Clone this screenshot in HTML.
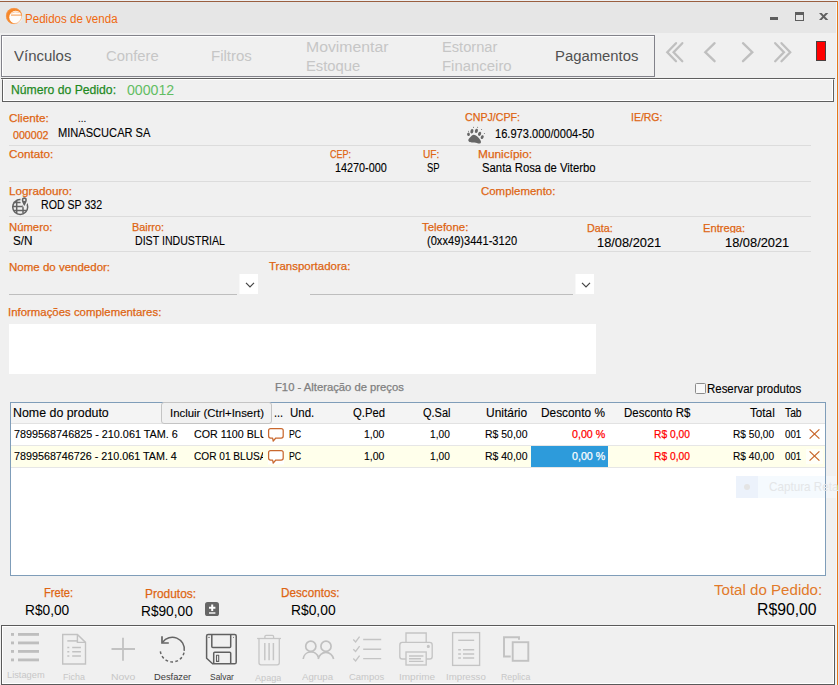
<!DOCTYPE html>
<html lang="pt-BR"><head><meta charset="utf-8"><title>Pedidos de venda</title>
<style>
*{box-sizing:border-box;margin:0;padding:0}
html,body{width:839px;height:685px;overflow:hidden;background:#F0F0F0}
body{position:relative;font-family:"Liberation Sans",sans-serif;}
.t{position:absolute;white-space:nowrap;display:block;transform-origin:0 0}
.a{position:absolute;display:block}
.sep{position:absolute;height:1px;background:#DCDCDC;left:9px;width:802px}
svg{position:absolute;overflow:visible}

</style></head>
<body>
<!-- window frame -->
<div class="a" style="left:0;top:0;width:839px;height:1px;background:#EEF0F2"></div>
<div class="a" style="left:0;top:2px;width:837px;height:31px;background:#E6E6E6"></div>
<div class="a" style="left:0;top:1px;width:838px;height:1px;background:#9A5F40"></div>
<div class="a" style="left:837px;top:1px;width:1px;height:684px;background:#E8761A"></div>
<div class="a" style="left:838px;top:0;width:1px;height:685px;background:#DFE8F0"></div>
<div class="a" style="left:836px;top:2px;width:1px;height:683px;background:#F4F7FA"></div>
<!-- app icon -->
<svg style="left:6px;top:8px" width="16" height="16" viewBox="0 0 16 16">
  <circle cx="8" cy="8" r="8" fill="#F5872A"/>
  <circle cx="9.7" cy="9.3" r="6.45" fill="#FFFDFB"/>
  <circle cx="8" cy="8" r="7.7" fill="none" stroke="#F5A05A" stroke-width="0.6"/>
  <path d="M5 7.1 H16" stroke="#F58220" stroke-width="0.8" fill="none"/>
  <path d="M5.2 5.2 Q9 2.9 13.4 4.5" stroke="#F9B47C" stroke-width="0.7" fill="none"/>
</svg>
<!-- window buttons -->
<div class="a" style="left:770px;top:17px;width:8px;height:3px;background:#5E5E5E"></div>
<div class="a" style="left:795px;top:12px;width:9px;height:9px;border:1px solid #5E5E5E;border-top-width:3px"></div>
<svg style="left:818px;top:13px" width="11" height="7" viewBox="818 13 11 7"><path d="M819 13 h2.7 l6.6 7 h-2.7 z" fill="#606060"/><path d="M828.3 13 h-2.7 l-6.6 7 h2.7 z" fill="#606060"/></svg>
<!-- top toolbar box -->
<div class="a" style="left:1px;top:35px;width:654px;height:42px;border:1px solid #82828A;box-shadow:inset 1px 1px 0 #FFFFFF"></div>
<!-- nav arrows -->
<svg style="left:660px;top:38px" width="140" height="30" viewBox="660 38 140 30" fill="none" stroke="#BFBFBF" stroke-width="2.3" stroke-linecap="round">
  <path d="M676 43.2 L667.3 52.2 L676 61.2"/><path d="M682.3 43.2 L673.6 52.2 L682.3 61.2"/>
  <path d="M714.6 43.2 L705.3 52.2 L714.6 61.2"/>
  <path d="M743 43.2 L752.3 52.2 L743 61.2"/>
  <path d="M775.2 43.2 L783.9 52.2 L775.2 61.2"/><path d="M781.5 43.2 L790.2 52.2 L781.5 61.2"/>
</svg>
<div class="a" style="left:816px;top:41px;width:10px;height:20px;background:#FF0000;border:1px solid #4A4040"></div>
<!-- line + numero box -->
<div class="a" style="left:1px;top:78px;width:834px;height:1px;background:#5F5F5F"></div>
<div class="a" style="left:2px;top:79px;width:832px;height:23px;border:1px solid #5F5F5F;border-top:1px solid #FFFFFF;box-shadow:inset 1px 0 0 #FFFFFF, inset -1px -1px 0 #FFFFFF"></div>
<!-- separators -->
<div class="sep" style="top:145px"></div>
<div class="sep" style="top:181px"></div>
<div class="sep" style="top:216px"></div>
<div class="sep" style="top:251px"></div>
<!-- paw icon -->
<svg style="left:460px;top:122px" width="30" height="26" viewBox="460 122 30 26" fill="#666">
  <ellipse cx="468.5" cy="134.3" rx="1.4" ry="1.7" transform="rotate(-15 468.5 134.3)"/>
  <ellipse cx="471.9" cy="131.3" rx="1.5" ry="2.3" transform="rotate(12 471.9 131.3)"/>
  <ellipse cx="476.4" cy="130.9" rx="1.5" ry="2.2" transform="rotate(15 476.4 130.9)"/>
  <ellipse cx="479.6" cy="133.8" rx="1.5" ry="2.2" transform="rotate(20 479.6 133.8)"/>
  <ellipse cx="482.2" cy="137.1" rx="1.4" ry="2" transform="rotate(25 482.2 137.1)"/>
  <circle cx="468.5" cy="131.2" r="0.5"/><circle cx="473.5" cy="127.3" r="0.55"/><circle cx="477.6" cy="127.3" r="0.55"/><circle cx="481.6" cy="129.5" r="0.5"/><circle cx="484.4" cy="133.5" r="0.5"/>
  <path d="M473.9 134.8 C476 134.8 478.2 137.2 480 139.6 C481.6 141.8 481.2 143.8 479.4 143.6 C477.4 143.4 476.6 142.4 474.4 142.4 C472 142.4 470.2 142.8 468.9 141.6 C467.6 140.2 468.6 138.6 470 137.4 C471.4 136.2 472.4 134.8 473.9 134.8 Z"/>
</svg>
<!-- globe icon -->
<svg style="left:5px;top:192px" width="40" height="28" viewBox="5 192 40 28" fill="none" stroke="#646464" stroke-width="1.5">
  <circle cx="20.2" cy="207" r="7.5"/>
  <path d="M16.7 200.6 V213.4 M23 205 V213.6 M13.4 202.6 H20.6 M12.8 206.6 H22 M13.4 210.6 H27"/>
  <path d="M24.3 196.6 C22.4 196.6 21.1 198 21.1 199.9 C21.1 202.4 24.3 207 24.3 207 C24.3 207 27.5 202.4 27.5 199.9 C27.5 198 26.2 196.6 24.3 196.6 Z" fill="#646464" stroke="#F0F0F0" stroke-width="1.3"/>
  <circle cx="24.3" cy="200" r="1.1" fill="#F0F0F0" stroke="none"/>
</svg>
<!-- dropdowns -->
<div class="a" style="left:9px;top:294px;width:228px;height:1px;background:#BEBEBE"></div>
<div class="a" style="left:239px;top:274px;width:19px;height:20px;background:#FFFFFF;border-left:1px solid #F8F8F8"></div>
<svg style="left:245px;top:282px" width="10" height="6" viewBox="0 0 10 6"><path d="M1 0.8 L5 4.8 L9 0.8" fill="none" stroke="#444" stroke-width="1.2"/></svg>
<div class="a" style="left:310px;top:294px;width:263px;height:1px;background:#BEBEBE"></div>
<div class="a" style="left:575px;top:274px;width:19px;height:20px;background:#FFFFFF;border-left:1px solid #F8F8F8"></div>
<svg style="left:581px;top:282px" width="10" height="6" viewBox="0 0 10 6"><path d="M1 0.8 L5 4.8 L9 0.8" fill="none" stroke="#444" stroke-width="1.2"/></svg>
<!-- textarea -->
<div class="a" style="left:9px;top:324px;width:587px;height:50px;background:#FFFFFF"></div>
<!-- checkbox -->
<div class="a" style="left:695px;top:383px;width:11px;height:11px;background:#F9F9F9;border:1px solid #8C8C8C;border-radius:1.5px"></div>
<!-- grid -->
<div class="a" style="left:10px;top:402px;width:816px;height:174px;background:#FFFFFF;border:1px solid #7F9DB9"></div>
<div class="a" style="left:11px;top:403px;width:814px;height:20px;background:#F4F4F4"></div>
<div class="a" style="left:11px;top:423px;width:814px;height:1px;background:#E2E2E2"></div>
<div class="a" style="left:11px;top:445px;width:814px;height:1px;background:#E6E6E6"></div>
<div class="a" style="left:11px;top:446px;width:814px;height:21px;background:#FFFFEB"></div>
<div class="a" style="left:11px;top:467px;width:814px;height:1px;background:#E6E6E6"></div>
<div class="a" style="left:531px;top:446px;width:77px;height:21px;background:#2D9BDB"></div>
<div class="a" style="left:161px;top:402px;width:111px;height:22px;background:#F1F1F1;border:1px solid #C4C4C4;border-radius:3px"></div>
<!-- comment icons + X icons -->
<svg style="left:266px;top:426px" width="22" height="18" viewBox="266 426 22 18"><path d="M270.6 428.6 H281.2 Q283.2 428.6 283.2 430.6 V436 Q283.2 438 281.2 438 H275.8 L273.2 441.2 L272.6 438 H270.6 Q268.6 438 268.6 436 V430.6 Q268.6 428.6 270.6 428.6 Z" fill="#FFFFFF" stroke="#C9682E" stroke-width="1.25" stroke-linejoin="round"/></svg>
<svg style="left:266px;top:448px" width="22" height="18" viewBox="266 448 22 18"><rect x="268" y="449.8" width="16" height="14.6" fill="#FFFFFF"/><path d="M270.6 450.6 H281.2 Q283.2 450.6 283.2 452.6 V458 Q283.2 460 281.2 460 H275.8 L273.2 463.2 L272.6 460 H270.6 Q268.6 460 268.6 458 V452.6 Q268.6 450.6 270.6 450.6 Z" fill="#FFFFFF" stroke="#C9682E" stroke-width="1.25" stroke-linejoin="round"/></svg>
<svg style="left:809.4px;top:429px" width="11" height="10" viewBox="0 0 11 10"><path d="M0.6 0.4 L10.4 9.6 M10.4 0.4 L0.6 9.6" stroke="#C8662A" stroke-width="1.3" fill="none"/></svg>
<div class="a" style="left:806px;top:449px;width:17px;height:15px;background:#FFFFF8"></div>
<svg style="left:809.4px;top:451px" width="11" height="10" viewBox="0 0 11 10"><path d="M0.6 0.4 L10.4 9.6 M10.4 0.4 L0.6 9.6" stroke="#C8662A" stroke-width="1.3" fill="none"/></svg>
<!-- faint overlay -->
<div class="a" style="left:736px;top:476px;width:22px;height:22px;background:#ECF2FB"></div>
<div class="a" style="left:758px;top:476px;width:67px;height:22px;background:#F5FAFE"></div>
<div class="a" style="left:826px;top:476px;width:10px;height:22px;background:#F3F5F7"></div>
<div class="a" style="left:744px;top:484px;width:6px;height:6px;border-radius:3px;background:#E4E4E4"></div>
<!-- small icon near produtos -->
<svg style="left:205px;top:602px" width="14" height="14" viewBox="0 0 14 14"><rect x="0" y="0" width="14" height="14" rx="2.6" fill="#666"/><path d="M7.2 2.6 V9 M4 5.8 H10.4" stroke="#FFF" stroke-width="2" fill="none"/><path d="M4 11 H10.4" stroke="#FFF" stroke-width="1.4"/></svg>
<!-- bottom toolbar box -->
<div class="a" style="left:1px;top:625px;width:834px;height:60px;border:1px solid #5A5A5A;box-shadow:inset 1px 1px 0 #FFFFFF, inset -1px -1px 0 #FFFFFF"></div>
<!-- bottom toolbar icons -->
<svg style="left:0;top:626px" width="839" height="58" viewBox="0 626 839 58" fill="none">
  <!-- Listagem -->
  <g fill="#BEBEBE">
    <rect x="11" y="633" width="3" height="2.8"/><rect x="18" y="633" width="21" height="2.8"/>
    <rect x="11" y="641.5" width="3" height="2.8"/><rect x="18" y="641.5" width="21" height="2.8"/>
    <rect x="11" y="650" width="3" height="2.8"/><rect x="18" y="650" width="21" height="2.8"/>
    <rect x="11" y="658.5" width="3" height="2.8"/><rect x="18" y="658.5" width="21" height="2.8"/>
  </g>
  <!-- Ficha -->
  <g stroke="#C2C2C2" stroke-width="1.4">
    <path d="M62.7 634.5 H77.4 L85.5 642.4 V664 H62.7 Z"/>
    <path d="M77.4 634.5 V642.4 H85.5"/>
    <path d="M67.3 640.9 H77.4" stroke-width="1.5"/>
    <path d="M67.3 647.6 H69.3 M72.2 647.6 H80.9 M67.3 651.8 H69.3 M72.2 651.8 H80.9 M67.3 655.9 H69.3 M72.2 655.9 H80.9" stroke-width="1.5"/>
  </g>
  <!-- Novo -->
  <path d="M123 637.8 V660.8 M111.5 649 H135" stroke="#C2C2C2" stroke-width="1.8"/>
  <!-- Desfazer -->
  <g stroke="#646464" stroke-width="1.45">
    <path d="M162.6 642.2 A12 12 0 0 1 184.2 650.9"/>
    <path d="M184 652.6 A12 12 0 0 1 160.3 649.9" stroke-dasharray="2.8 2.3"/>
    <path d="M162 636.2 V643 H168.8" stroke-width="1.7"/>
  </g>
  <!-- Salvar -->
  <g stroke="#606060" stroke-width="1.5" stroke-linejoin="round">
    <path d="M208.2 634.4 H234.6 Q236.2 634.4 236.2 636 V662.2 Q236.2 663.8 234.6 663.8 H212.6 L206.6 658.2 V636 Q206.6 634.4 208.2 634.4 Z"/>
    <path d="M211.8 634.6 V646.4 Q211.8 647.4 212.8 647.4 H229.7 Q230.7 647.4 230.7 646.4 V634.6"/>
    <path d="M213.7 663.6 V653.2 Q213.7 652.2 214.7 652.2 H229.7 Q230.7 652.2 230.7 653.2 V663.6"/>
    <rect x="216.5" y="655.2" width="2.2" height="6.2" stroke-width="1.1"/>
    <path d="M208.3 637.4 H209.7 M233.1 637.4 H233.9" stroke-width="1"/>
  </g>
  <!-- Apaga -->
  <g stroke="#C6C6C6" stroke-width="1.3">
    <path d="M257.1 638.5 H281"/>
    <path d="M264.9 638.5 V636.6 Q264.9 635.4 266.1 635.4 H272.4 Q273.6 635.4 273.6 636.6 V638.5"/>
    <path d="M259 638.5 V662.8 Q259 664.8 261 664.8 H277.3 Q279.3 664.8 279.3 662.8 V638.5"/>
    <path d="M264.8 643 V660.2 M269.1 643 V660.2 M273.4 643 V660.2" stroke-width="1.5"/>
  </g>
  <!-- Agrupa -->
  <g stroke="#C0C0C0" stroke-width="1.7">
    <circle cx="310.8" cy="646.2" r="5.1"/>
    <circle cx="326" cy="646.2" r="5.1"/>
    <path d="M303.2 659 A7.8 7.8 0 0 1 318.4 657.4"/>
    <path d="M318.2 659 A7.8 7.8 0 0 1 333.6 659"/>
  </g>
  <!-- Campos -->
  <g stroke="#C4C4C4" stroke-width="1.35">
    <path d="M353.3 639.6 L355.6 641.9 L359.6 636.6 M363.2 639.5 H381.2"/>
    <path d="M353.3 649.2 L355.6 651.5 L359.6 646.2 M363.2 649.2 H381.2" />
    <path d="M353.3 658.6 L355.6 660.9 L359.6 655.6 M363.2 658.6 H381.2"/>
  </g>
  <!-- Imprime -->
  <g stroke="#C4C4C4" stroke-width="1.35">
    <path d="M406 642.2 V633 H426.2 V642.2"/>
    <path d="M406 659 H402.4 Q399.8 659 399.8 656.4 V645 Q399.8 642.4 402.4 642.4 H429.6 Q432.2 642.4 432.2 645 V656.4 Q432.2 659 429.6 659 H426.2"/>
    <rect x="406" y="652" width="20.2" height="13"/>
    <path d="M409 656 H423.4 M409 658.7 H421 M409 661.4 H423.4"/>
    <circle cx="428.3" cy="646.4" r="0.9" fill="#C4C4C4"/>
  </g>
  <!-- Impresso -->
  <g stroke="#C4C4C4" stroke-width="1.35">
    <rect x="452.6" y="632.6" width="27" height="32.8"/>
    <path d="M458.2 640.3 H474.2"/>
    <path d="M458.2 649.7 H460.9 M463 649.7 H474.2 M458.2 653.9 H460.9 M463 653.9 H474.2 M458.2 658 H460.9 M463 658 H474.2" stroke-width="1.5"/>
  </g>
  <!-- Replica -->
  <g stroke="#C2C2C2" stroke-width="1.9">
    <path d="M510.7 656.5 H504 V637.2 H519 V639.8"/>
    <rect x="512.7" y="642.2" width="15.6" height="18.6"/>
  </g>
</svg>

<span class="t" style="left:24.57px;top:13.30px;font-size:12.51px;line-height:12.51px;color:#F0690F;transform:scaleX(0.9251);">Pedidos de venda</span>
<span class="t" style="left:13.90px;top:49.31px;font-size:14.65px;line-height:14.65px;color:#505050;transform:scaleX(1.0227);">Vínculos</span>
<span class="t" style="left:106.20px;top:49.31px;font-size:14.65px;line-height:14.65px;color:#C6C6C6;transform:scaleX(1.0107);">Confere</span>
<span class="t" style="left:211.17px;top:49.31px;font-size:14.65px;line-height:14.65px;color:#C6C6C6;transform:scaleX(1.0251);">Filtros</span>
<span class="t" style="left:306.12px;top:40.31px;font-size:14.65px;line-height:14.65px;color:#C6C6C6;transform:scaleX(1.0780);">Movimentar</span>
<span class="t" style="left:306.19px;top:59.31px;font-size:14.65px;line-height:14.65px;color:#C6C6C6;transform:scaleX(1.0099);">Estoque</span>
<span class="t" style="left:442.20px;top:40.31px;font-size:14.65px;line-height:14.65px;color:#C6C6C6;transform:scaleX(1.0008);">Estornar</span>
<span class="t" style="left:442.18px;top:59.31px;font-size:14.65px;line-height:14.65px;color:#C6C6C6;transform:scaleX(1.0191);">Financeiro</span>
<span class="t" style="left:555.38px;top:49.31px;font-size:14.65px;line-height:14.65px;color:#505050;transform:scaleX(1.0150);">Pagamentos</span>
<span class="t" style="left:11.27px;top:83.30px;font-size:13.09px;line-height:13.09px;color:#1F8A1F;transform:scaleX(0.9320);-webkit-text-stroke:0.25px;">Número do Pedido:</span>
<span class="t" style="left:126.90px;top:83.31px;font-size:14.65px;line-height:14.65px;color:#62BD62;transform:scaleX(0.9669);">000012</span>
<span class="t" style="left:9.20px;top:112.30px;font-size:11.72px;line-height:11.72px;color:#DE6512;transform:scaleX(1.0006);-webkit-text-stroke:0.25px;">Cliente:</span>
<span class="t" style="left:78.07px;top:112.30px;font-size:11.72px;line-height:11.72px;color:#000000;transform:scaleX(0.8341);-webkit-text-stroke:0.12px;">...</span>
<span class="t" style="left:13.20px;top:130.30px;font-size:10.75px;line-height:10.75px;color:#DE6512;transform:scaleX(0.9890);-webkit-text-stroke:0.25px;">000002</span>
<span class="t" style="left:57.71px;top:127.30px;font-size:12.51px;line-height:12.51px;color:#000000;transform:scaleX(0.8869);-webkit-text-stroke:0.12px;">MINASCUCAR SA</span>
<span class="t" style="left:465.20px;top:111.30px;font-size:11.72px;line-height:11.72px;color:#DE6512;transform:scaleX(0.9089);-webkit-text-stroke:0.25px;">CNPJ/CPF:</span>
<span class="t" style="left:494.60px;top:128.30px;font-size:12.51px;line-height:12.51px;color:#000000;transform:scaleX(0.8870);-webkit-text-stroke:0.12px;">16.973.000/0004-50</span>
<span class="t" style="left:631.21px;top:111.30px;font-size:11.72px;line-height:11.72px;color:#DE6512;transform:scaleX(0.8936);-webkit-text-stroke:0.25px;">IE/RG:</span>
<span class="t" style="left:9.20px;top:148.30px;font-size:11.72px;line-height:11.72px;color:#DE6512;transform:scaleX(1.0013);-webkit-text-stroke:0.25px;">Contato:</span>
<span class="t" style="left:330.20px;top:148.30px;font-size:11.72px;line-height:11.72px;color:#DE6512;transform:scaleX(0.7677);-webkit-text-stroke:0.25px;">CEP:</span>
<span class="t" style="left:334.90px;top:162.30px;font-size:12.51px;line-height:12.51px;color:#000000;transform:scaleX(0.8658);-webkit-text-stroke:0.12px;">14270-000</span>
<span class="t" style="left:423.20px;top:148.30px;font-size:11.72px;line-height:11.72px;color:#DE6512;transform:scaleX(0.8646);-webkit-text-stroke:0.25px;">UF:</span>
<span class="t" style="left:426.90px;top:162.30px;font-size:12.51px;line-height:12.51px;color:#000000;transform:scaleX(0.7590);-webkit-text-stroke:0.12px;">SP</span>
<span class="t" style="left:478.20px;top:148.30px;font-size:11.72px;line-height:11.72px;color:#DE6512;transform:scaleX(1.0122);-webkit-text-stroke:0.25px;">Município:</span>
<span class="t" style="left:481.90px;top:162.30px;font-size:12.51px;line-height:12.51px;color:#000000;transform:scaleX(0.9053);-webkit-text-stroke:0.12px;">Santa Rosa de Viterbo</span>
<span class="t" style="left:9.20px;top:185.30px;font-size:11.72px;line-height:11.72px;color:#DE6512;transform:scaleX(0.9977);-webkit-text-stroke:0.25px;">Logradouro:</span>
<span class="t" style="left:41.35px;top:199.30px;font-size:12.51px;line-height:12.51px;color:#000000;transform:scaleX(0.8485);-webkit-text-stroke:0.12px;">ROD SP 332</span>
<span class="t" style="left:481.20px;top:185.30px;font-size:11.72px;line-height:11.72px;color:#DE6512;transform:scaleX(0.9756);-webkit-text-stroke:0.25px;">Complemento:</span>
<span class="t" style="left:9.20px;top:221.30px;font-size:11.72px;line-height:11.72px;color:#DE6512;transform:scaleX(0.9647);-webkit-text-stroke:0.25px;">Número:</span>
<span class="t" style="left:13.20px;top:235.30px;font-size:12.51px;line-height:12.51px;color:#000000;transform:scaleX(0.9370);-webkit-text-stroke:0.12px;">S/N</span>
<span class="t" style="left:132.20px;top:221.30px;font-size:11.72px;line-height:11.72px;color:#DE6512;transform:scaleX(0.9282);-webkit-text-stroke:0.25px;">Bairro:</span>
<span class="t" style="left:135.05px;top:235.30px;font-size:12.51px;line-height:12.51px;color:#000000;transform:scaleX(0.8489);-webkit-text-stroke:0.12px;">DIST INDUSTRIAL</span>
<span class="t" style="left:421.90px;top:221.30px;font-size:11.72px;line-height:11.72px;color:#DE6512;transform:scaleX(0.9745);-webkit-text-stroke:0.25px;">Telefone:</span>
<span class="t" style="left:426.60px;top:235.30px;font-size:12.51px;line-height:12.51px;color:#000000;transform:scaleX(0.8876);-webkit-text-stroke:0.12px;">(0xx49)3441-3120</span>
<span class="t" style="left:587.20px;top:222.30px;font-size:11.72px;line-height:11.72px;color:#DE6512;transform:scaleX(0.9188);-webkit-text-stroke:0.25px;">Data:</span>
<span class="t" style="left:596.60px;top:237.31px;font-size:12.7px;line-height:12.7px;color:#000000;transform:scaleX(1.0104);-webkit-text-stroke:0.12px;">18/08/2021</span>
<span class="t" style="left:703.40px;top:222.30px;font-size:11.72px;line-height:11.72px;color:#DE6512;transform:scaleX(0.9513);-webkit-text-stroke:0.25px;height:10.9px;overflow:hidden;">Entrega:</span>
<span class="t" style="left:724.90px;top:237.31px;font-size:12.7px;line-height:12.7px;color:#000000;transform:scaleX(1.0119);-webkit-text-stroke:0.12px;">18/08/2021</span>
<span class="t" style="left:9.20px;top:261.30px;font-size:11.72px;line-height:11.72px;color:#DE6512;transform:scaleX(0.9818);-webkit-text-stroke:0.25px;">Nome do vendedor:</span>
<span class="t" style="left:268.90px;top:260.30px;font-size:11.72px;line-height:11.72px;color:#DE6512;transform:scaleX(0.9808);-webkit-text-stroke:0.25px;">Transportadora:</span>
<span class="t" style="left:8.23px;top:306.30px;font-size:11.72px;line-height:11.72px;color:#DE6512;transform:scaleX(0.9727);-webkit-text-stroke:0.25px;">Informações complementares:</span>
<span class="t" style="left:274.90px;top:382.30px;font-size:10.75px;line-height:10.75px;color:#808080;transform:scaleX(1.0469);-webkit-text-stroke:0.25px;">F10 - Alteração de preços</span>
<span class="t" style="left:707.38px;top:383.30px;font-size:12.51px;line-height:12.51px;color:#000000;transform:scaleX(0.9156);-webkit-text-stroke:0.12px;">Reservar produtos</span>
<span class="t" style="left:13.21px;top:407.30px;font-size:12.51px;line-height:12.51px;color:#000000;transform:scaleX(0.9913);-webkit-text-stroke:0.12px;">Nome do produto</span>
<span class="t" style="left:169.91px;top:408.30px;font-size:11.53px;line-height:11.53px;color:#000000;transform:scaleX(0.9885);-webkit-text-stroke:0.12px;">Incluir (Ctrl+Insert)</span>
<span class="t" style="left:273.83px;top:407.30px;font-size:12.51px;line-height:12.51px;color:#000000;transform:scaleX(0.8719);-webkit-text-stroke:0.12px;">...</span>
<span class="t" style="left:289.70px;top:407.30px;font-size:12.51px;line-height:12.51px;color:#000000;transform:scaleX(0.9178);-webkit-text-stroke:0.12px;">Und.</span>
<span class="t" style="left:352.90px;top:407.30px;font-size:12.51px;line-height:12.51px;color:#000000;transform:scaleX(0.9018);-webkit-text-stroke:0.12px;">Q.Ped</span>
<span class="t" style="left:423.10px;top:407.30px;font-size:12.51px;line-height:12.51px;color:#000000;transform:scaleX(0.8791);-webkit-text-stroke:0.12px;">Q.Sal</span>
<span class="t" style="left:486.40px;top:407.30px;font-size:12.51px;line-height:12.51px;color:#000000;transform:scaleX(0.9555);-webkit-text-stroke:0.12px;">Unitário</span>
<span class="t" style="left:540.95px;top:407.30px;font-size:12.51px;line-height:12.51px;color:#000000;transform:scaleX(0.9490);-webkit-text-stroke:0.12px;">Desconto %</span>
<span class="t" style="left:623.58px;top:407.30px;font-size:12.51px;line-height:12.51px;color:#000000;transform:scaleX(0.9186);-webkit-text-stroke:0.12px;">Desconto R$</span>
<span class="t" style="left:750.40px;top:407.30px;font-size:12.51px;line-height:12.51px;color:#000000;transform:scaleX(0.9366);-webkit-text-stroke:0.12px;">Total</span>
<span class="t" style="left:784.90px;top:407.30px;font-size:12.51px;line-height:12.51px;color:#000000;transform:scaleX(0.8218);-webkit-text-stroke:0.12px;">Tab</span>
<span class="t" style="left:14.20px;top:428.30px;font-size:11.72px;line-height:11.72px;color:#000000;transform:scaleX(0.9230);-webkit-text-stroke:0.12px;">7899568746825 - 210.061 TAM. 6</span>
<span class="t" style="left:193.50px;top:428.30px;font-size:11.72px;line-height:11.72px;color:#000000;transform:scaleX(0.9128);-webkit-text-stroke:0.12px;width:76.14px;overflow:hidden;">COR 1100 BLU</span>
<span class="t" style="left:289.20px;top:428.30px;font-size:11.72px;line-height:11.72px;color:#000000;transform:scaleX(0.7500);-webkit-text-stroke:0.12px;">PC</span>
<span class="t" style="left:364.40px;top:428.30px;font-size:11.72px;line-height:11.72px;color:#000000;transform:scaleX(0.8931);-webkit-text-stroke:0.12px;">1,00</span>
<span class="t" style="left:429.90px;top:428.30px;font-size:11.72px;line-height:11.72px;color:#000000;transform:scaleX(0.8673);-webkit-text-stroke:0.12px;">1,00</span>
<span class="t" style="left:485.30px;top:428.30px;font-size:11.72px;line-height:11.72px;color:#000000;transform:scaleX(0.8929);-webkit-text-stroke:0.12px;">R$ 50,00</span>
<span class="t" style="left:571.90px;top:428.30px;font-size:11.72px;line-height:11.72px;color:#FF0000;transform:scaleX(0.9123);-webkit-text-stroke:0.25px;">0,00 %</span>
<span class="t" style="left:653.70px;top:428.30px;font-size:11.72px;line-height:11.72px;color:#FF0000;transform:scaleX(0.8741);-webkit-text-stroke:0.25px;">R$ 0,00</span>
<span class="t" style="left:732.90px;top:428.30px;font-size:11.72px;line-height:11.72px;color:#000000;transform:scaleX(0.8638);-webkit-text-stroke:0.12px;">R$ 50,00</span>
<span class="t" style="left:784.90px;top:428.30px;font-size:11.72px;line-height:11.72px;color:#000000;transform:scaleX(0.8248);-webkit-text-stroke:0.12px;">001</span>
<span class="t" style="left:14.20px;top:450.30px;font-size:11.72px;line-height:11.72px;color:#000000;transform:scaleX(0.9178);-webkit-text-stroke:0.12px;">7899568746726 - 210.061 TAM. 4</span>
<span class="t" style="left:193.50px;top:450.30px;font-size:11.72px;line-height:11.72px;color:#000000;transform:scaleX(0.8634);-webkit-text-stroke:0.12px;width:80.49px;overflow:hidden;">COR 01 BLUSA</span>
<span class="t" style="left:289.20px;top:450.30px;font-size:11.72px;line-height:11.72px;color:#000000;transform:scaleX(0.7500);-webkit-text-stroke:0.12px;">PC</span>
<span class="t" style="left:364.40px;top:450.30px;font-size:11.72px;line-height:11.72px;color:#000000;transform:scaleX(0.8931);-webkit-text-stroke:0.12px;">1,00</span>
<span class="t" style="left:429.90px;top:450.30px;font-size:11.72px;line-height:11.72px;color:#000000;transform:scaleX(0.8673);-webkit-text-stroke:0.12px;">1,00</span>
<span class="t" style="left:485.30px;top:450.30px;font-size:11.72px;line-height:11.72px;color:#000000;transform:scaleX(0.8929);-webkit-text-stroke:0.12px;">R$ 40,00</span>
<span class="t" style="left:571.90px;top:450.30px;font-size:11.72px;line-height:11.72px;color:#FFFFFF;transform:scaleX(0.9123);-webkit-text-stroke:0.25px;">0,00 %</span>
<span class="t" style="left:653.70px;top:450.30px;font-size:11.72px;line-height:11.72px;color:#FF0000;transform:scaleX(0.8741);-webkit-text-stroke:0.25px;">R$ 0,00</span>
<span class="t" style="left:732.90px;top:450.30px;font-size:11.72px;line-height:11.72px;color:#000000;transform:scaleX(0.8638);-webkit-text-stroke:0.12px;">R$ 40,00</span>
<span class="t" style="left:784.90px;top:450.30px;font-size:11.72px;line-height:11.72px;color:#000000;transform:scaleX(0.8248);-webkit-text-stroke:0.12px;">001</span>
<span class="t" style="left:768.50px;top:480.31px;font-size:13.68px;line-height:13.68px;color:#E4E6E8;transform:scaleX(0.8550);width:85px;overflow:hidden;">Captura Reta</span>
<span class="t" style="left:43.51px;top:587.31px;font-size:12.51px;line-height:12.51px;color:#DE6512;transform:scaleX(0.8917);-webkit-text-stroke:0.25px;">Frete:</span>
<span class="t" style="left:24.66px;top:603.31px;font-size:14.65px;line-height:14.65px;color:#000000;transform:scaleX(0.9356);">R$0,00</span>
<span class="t" style="left:145.34px;top:588.31px;font-size:12.51px;line-height:12.51px;color:#DE6512;transform:scaleX(0.9552);-webkit-text-stroke:0.25px;">Produtos:</span>
<span class="t" style="left:140.66px;top:604.31px;font-size:14.65px;line-height:14.65px;color:#000000;transform:scaleX(0.9352);">R$90,00</span>
<span class="t" style="left:281.26px;top:587.31px;font-size:12.51px;line-height:12.51px;color:#DE6512;transform:scaleX(0.9352);-webkit-text-stroke:0.25px;">Descontos:</span>
<span class="t" style="left:291.26px;top:603.31px;font-size:14.65px;line-height:14.65px;color:#000000;transform:scaleX(0.9443);">R$0,00</span>
<span class="t" style="left:713.60px;top:582.31px;font-size:15.14px;line-height:15.14px;color:#E27A2A;transform:scaleX(0.9975);">Total do Pedido:</span>
<span class="t" style="left:756.65px;top:602.29px;font-size:16.61px;line-height:16.61px;color:#000000;transform:scaleX(0.9487);">R$90,00</span>
<span class="t" style="left:6.70px;top:671.30px;font-size:9.38px;line-height:9.38px;color:#C7C7C7;transform:scaleX(0.9887);">Listagem</span>
<span class="t" style="left:63.40px;top:673.30px;font-size:9.38px;line-height:9.38px;color:#C7C7C7;transform:scaleX(0.9531);">Ficha</span>
<span class="t" style="left:110.90px;top:673.30px;font-size:9.38px;line-height:9.38px;color:#C7C7C7;transform:scaleX(1.1120);">Novo</span>
<span class="t" style="left:153.90px;top:673.30px;font-size:9.38px;line-height:9.38px;color:#3C3C3C;transform:scaleX(0.9922);">Desfazer</span>
<span class="t" style="left:209.90px;top:673.30px;font-size:9.38px;line-height:9.38px;color:#3C3C3C;transform:scaleX(0.8998);">Salvar</span>
<span class="t" style="left:255.40px;top:674.30px;font-size:9.38px;line-height:9.38px;color:#C7C7C7;transform:scaleX(0.9715);height:10.2px;overflow:hidden;">Apaga</span>
<span class="t" style="left:301.90px;top:673.30px;font-size:9.38px;line-height:9.38px;color:#C7C7C7;transform:scaleX(1.0253);">Agrupa</span>
<span class="t" style="left:348.90px;top:673.30px;font-size:9.38px;line-height:9.38px;color:#C7C7C7;transform:scaleX(1.0107);">Campos</span>
<span class="t" style="left:398.60px;top:673.30px;font-size:9.38px;line-height:9.38px;color:#C7C7C7;transform:scaleX(1.0671);">Imprime</span>
<span class="t" style="left:446.40px;top:673.30px;font-size:9.38px;line-height:9.38px;color:#C7C7C7;transform:scaleX(1.0329);">Impresso</span>
<span class="t" style="left:501.40px;top:673.30px;font-size:9.38px;line-height:9.38px;color:#C7C7C7;transform:scaleX(0.9391);">Replica</span>
</body></html>
